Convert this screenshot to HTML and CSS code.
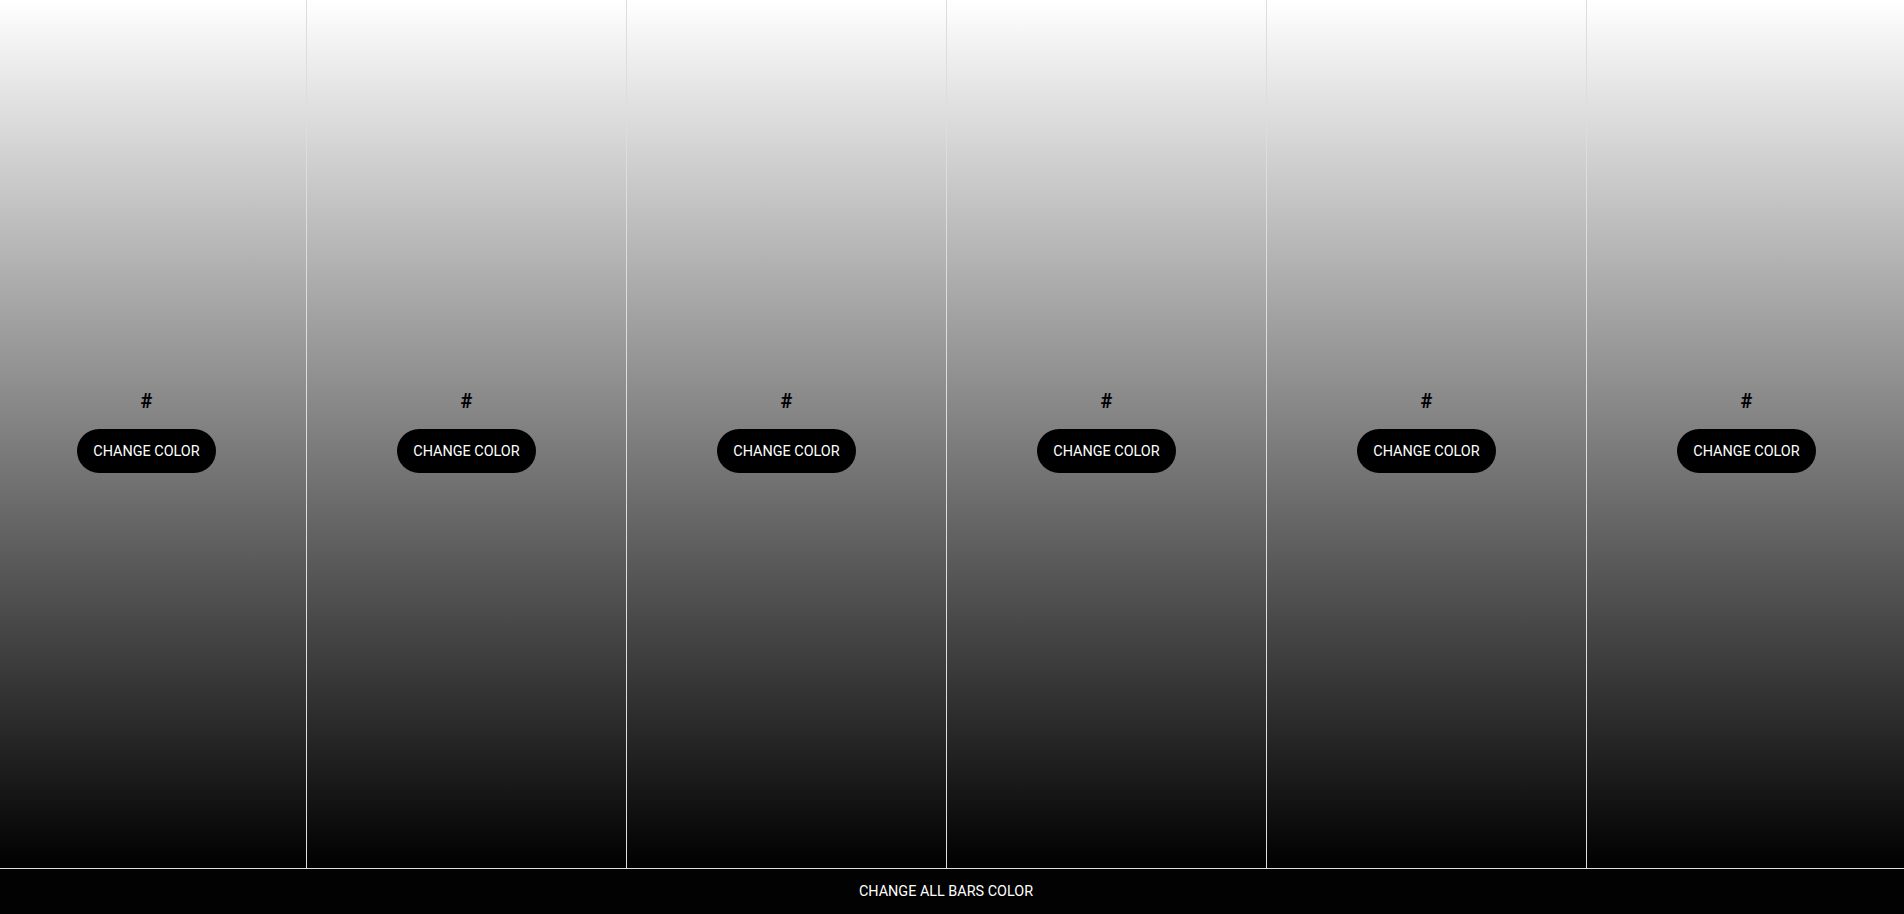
FILE: index.html
```html
<!DOCTYPE html>
<html lang="en">
<head>
<meta charset="utf-8">
<title>Color Bars</title>
<link rel="stylesheet" href="styles.css">
</head>
<body>
<div class="app">
  <main class="bars">
    <section class="bar"><h2 class="hex">#</h2><button class="btn">CHANGE COLOR</button></section>
    <section class="bar"><h2 class="hex">#</h2><button class="btn">CHANGE COLOR</button></section>
    <section class="bar"><h2 class="hex">#</h2><button class="btn">CHANGE COLOR</button></section>
    <section class="bar"><h2 class="hex">#</h2><button class="btn">CHANGE COLOR</button></section>
    <section class="bar"><h2 class="hex">#</h2><button class="btn">CHANGE COLOR</button></section>
    <section class="bar"><h2 class="hex">#</h2><button class="btn">CHANGE COLOR</button></section>
  </main>
  <footer class="footer">
    <button class="all-btn">CHANGE ALL BARS COLOR</button>
  </footer>
</div>
</body>
</html>
```

FILE: styles.css
```css
* { box-sizing: border-box; }
html, body {
  margin: 0;
  padding: 0;
  height: 100%;
  overflow: hidden;
  background: #020202;
  font-family: Roboto, "Liberation Sans", Arial, sans-serif;
}
.app {
  width: 1920px;
  margin-left: -14px;
  height: 100vh;
  display: flex;
  flex-direction: column;
}
.bars {
  flex: 1;
  display: flex;
}
.bar {
  flex: 1;
  display: flex;
  flex-direction: column;
  align-items: center;
  justify-content: center;
  padding-bottom: 6px;
  background: linear-gradient(to bottom, #ffffff, #000000);
  border-left: 1px solid #dddddd;
}
.hex {
  margin: 0 0 16px;
  font-size: 20px;
  line-height: 24px;
  font-weight: 700;
  color: #000;
}
.btn {
  height: 44px;
  padding: 0 16px;
  border: none;
  border-radius: 22px;
  background: #000;
  color: #fff;
  font-family: Roboto, "Liberation Sans", Arial, sans-serif;
  font-size: 14.4px;
  cursor: pointer;
}
.footer {
  height: 46px;
  border-top: 1px solid #dddddd;
  background: #020202;
  display: flex;
  align-items: center;
  justify-content: center;
}
.all-btn {
  border: none;
  background: transparent;
  color: #fff;
  font-family: Roboto, "Liberation Sans", Arial, sans-serif;
  font-size: 14.4px;
  padding: 0;
  cursor: pointer;
}
```
